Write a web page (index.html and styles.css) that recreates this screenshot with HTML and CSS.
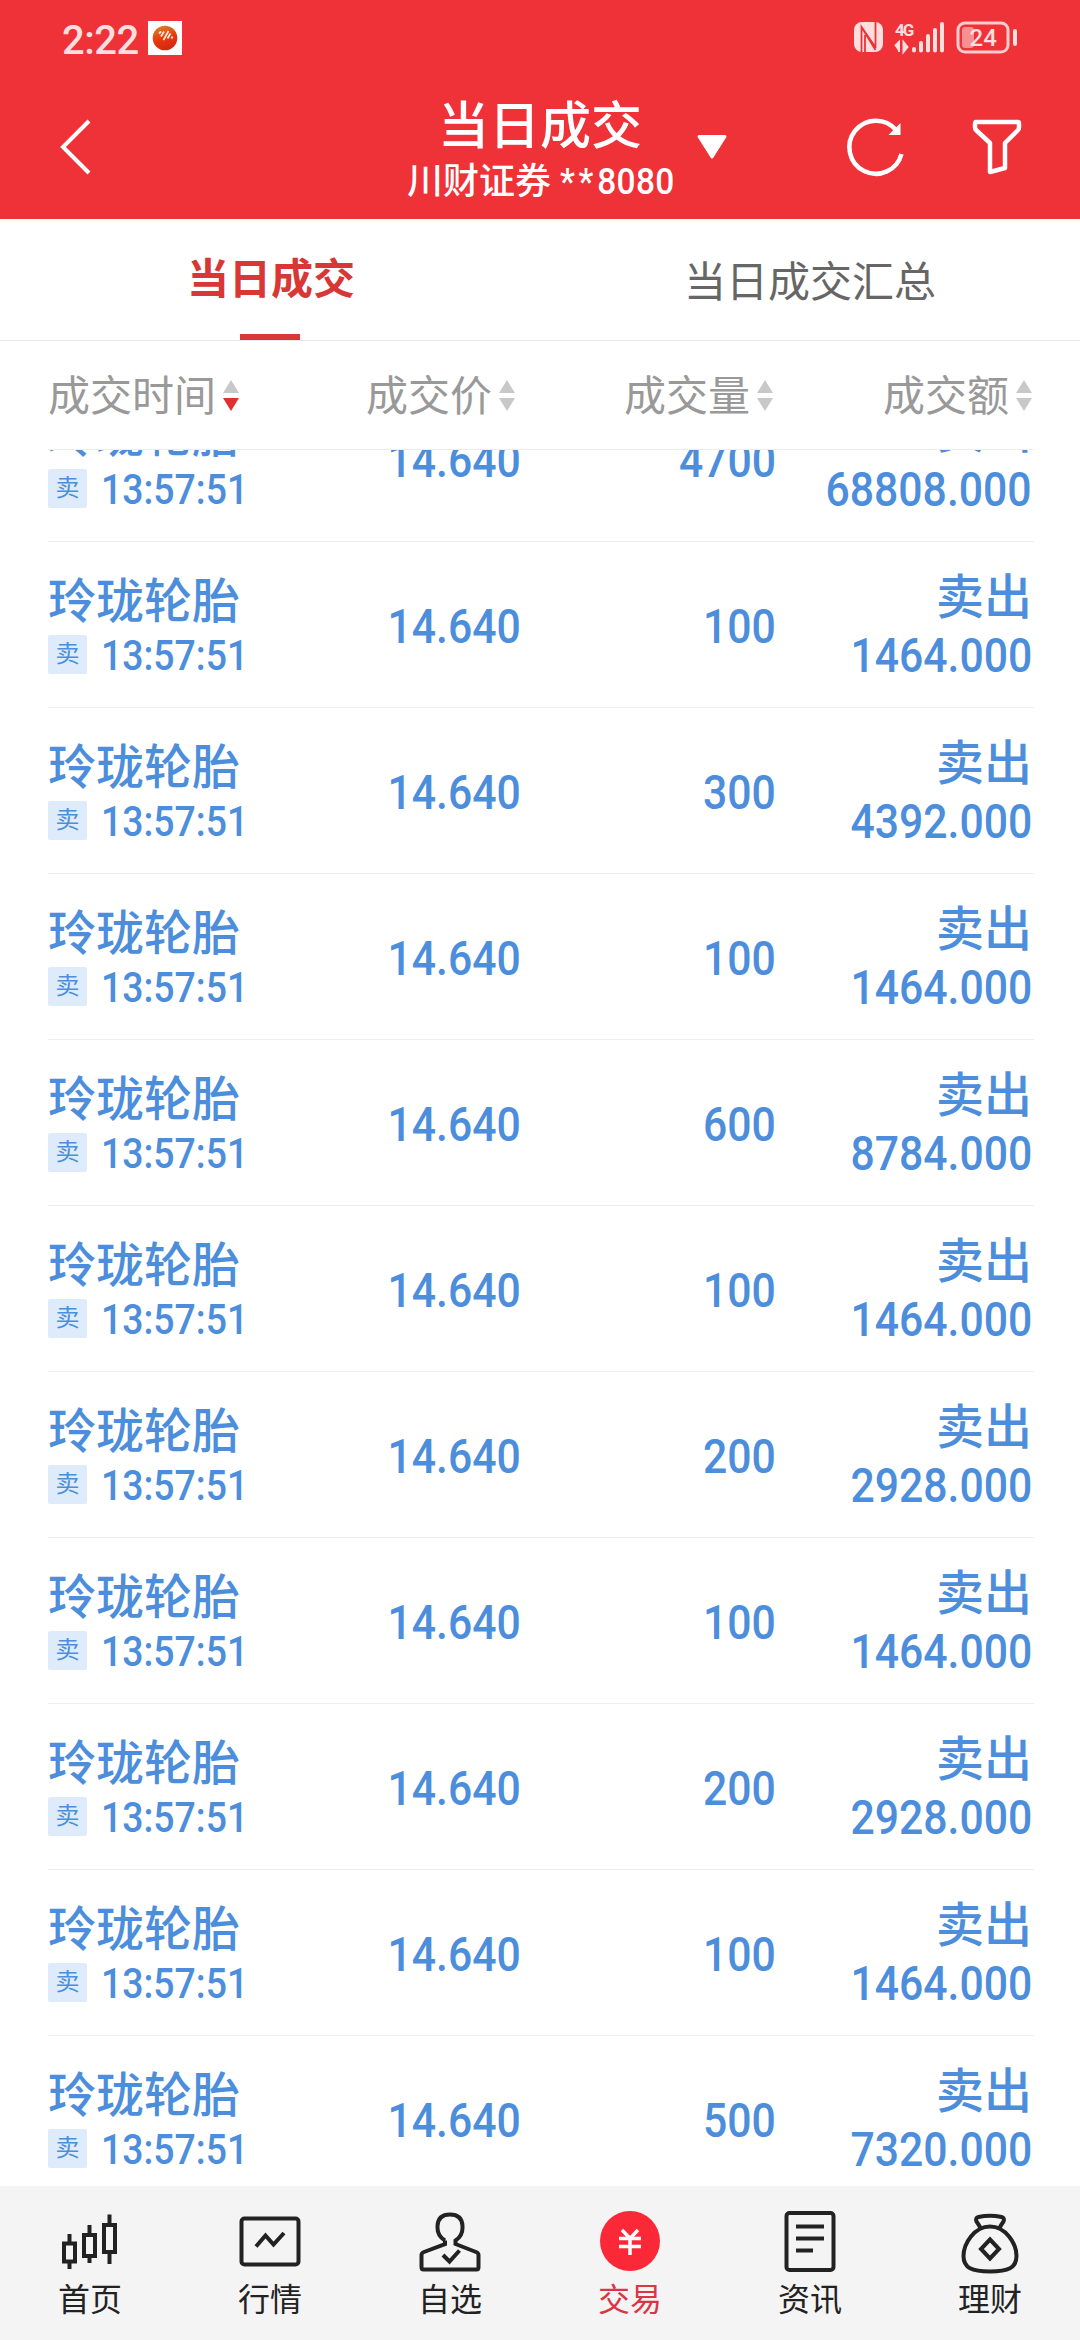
FILE: index.html
```
<!DOCTYPE html>
<html lang="zh-CN">

<head>
	<meta charset="UTF-8">
	<title>当日成交</title>
	<link rel="stylesheet" href="styles.css">
</head>

<body>
	<header class="header">
		<div class="status">
			<span class="clock">2:22</span>
			<svg class="app" width="34" height="34" viewBox="0 0 34 34">
				<defs>
					<linearGradient id="ball" x1="0" y1="0" x2="0.3" y2="1">
						<stop offset="0" stop-color="#d98a2b" />
						<stop offset="0.6" stop-color="#e8380c" />
						<stop offset="1" stop-color="#d32a12" />
					</linearGradient>
				</defs>
				<rect width="34" height="34" fill="#fff" />
				<circle cx="17" cy="17" r="12.3" fill="url(#ball)" />
				<path d="M11 12.500l2-2M13 15.500l3-5M15.500 19l5-9M19.500 17.500l3-5M23.500 17.500l1-2" stroke="#ffe9d8" stroke-width="1.8" fill="none" />
			</svg>
			<div class="signals">
				<svg width="170" height="36" viewBox="0 0 170 36">
					<rect x="1" y="1" width="29" height="30" rx="8" fill="#ffdede" />
					<path d="M8.500 31V6L23 27M22.500 1v25M8.500 6l14 23M12 31V14" stroke="#ef3138" stroke-width="1.8" fill="none" />
					<text class="net" x="42" y="14.500">4G</text>
					<path d="M42 25l4-4v10M50.500 21v10l4-5z" fill="#ffdede" stroke="#ffdede" stroke-width="2" />
					<path d="M61 28v1.500M68 22v7.500M75 15v14.500M82 9v20.500M89 3v26.500" stroke="#ffdede" stroke-width="4" stroke-linecap="round" fill="none" />
					<rect x="105" y="2" width="50" height="29" rx="7" stroke="#ffcdcd" stroke-width="3" fill="none" />
					<rect x="109" y="6" width="12" height="21" rx="3" fill="#f98f90" />
					<path d="M162 10v13" stroke="#ffdede" stroke-width="4" stroke-linecap="round" />
					<text class="level" x="116.500" y="25">24</text>
				</svg>
			</div>
		</div>
		<div class="bar">
			<svg class="back" width="34" height="58" viewBox="0 0 34 58">
				<path d="M31 3L5 29l26 26" stroke="#fff" stroke-width="4" fill="none" />
			</svg>
			<div class="titles">
				<h1>当日成交</h1>
				<p>川财证券 <span class="num"><i>**</i>8080</span></p>
			</div>
			<svg class="drop" width="30" height="24" viewBox="0 0 30 24">
				<path d="M2 1.500h26L15 22z" fill="#fff" stroke="#fff" stroke-width="3" stroke-linejoin="round" />
			</svg>
			<svg class="refresh" width="60" height="60" viewBox="0 0 60 60">
				<path d="M55.500 37A26.500 26.500 0 1 1 50 13" stroke="#fff" stroke-width="4.500" fill="none" />
				<path d="M54.500 6v12H42.500z" fill="#fff" />
			</svg>
			<svg class="filter" width="50" height="56" viewBox="0 0 50 56">
				<path d="M4 3h42q1 0 1 2v3q0 2-1 3L33 24v25l-15 4V24L4 11Q3 10 3 8V5q0-2 1-2z" stroke="#fff" stroke-width="4.500" stroke-linejoin="round" fill="none" />
			</svg>
		</div>
	</header>

	<nav class="tabs">
		<a class="tab on">当日成交</a>
		<a class="tab">当日成交汇总</a>
	</nav>

	<div class="thead">
		<span class="th">成交时间<i class="sort down"></i></span>
		<span class="th">成交价<i class="sort"></i></span>
		<span class="th">成交量<i class="sort"></i></span>
		<span class="th">成交额<i class="sort"></i></span>
	</div>

	<main class="list"></main>

	<footer class="nav">
		<a class="item">
			<svg width="60" height="60" viewBox="0 0 60 60">
				<path d="M4 32.500h11v18H4zM24 24h11v21H24zM44 14h11v27H44zM9.500 23v9M9.500 50.500v7.500M29.500 14v9M29.500 45v7M49.500 3.500V14M49.500 41v12" />
			</svg>
			首页
		</a>
		<a class="item">
			<svg width="60" height="60" viewBox="0 0 60 60">
				<rect x="1.500" y="7.500" width="57" height="46" rx="3" />
				<path d="M16 35.500l9.500-11 8 9L44 22" />
			</svg>
			行情
		</a>
		<a class="item">
			<svg width="60" height="60" viewBox="0 0 60 60">
				<path d="M25 29.500V33L4 41q-2.500 1-2.500 3v12q0 2.500 2 2.500h53q2 0 2-2.500V44q0-2-2.500-3L35.500 33v-3.500Q42.500 25 42.500 17v-2Q42 3.500 30 3.500T17.500 15v2q0 8 7.500 12.500" />
				<path d="M23 44l6.500 6.500 10-11" />
			</svg>
			自选
		</a>
		<a class="item on">
			<svg width="60" height="60" viewBox="0 0 60 60">
				<circle class="coin" cx="30" cy="30" r="30" />
				<path class="yen" d="M22 19l8 8.500 8-8.500M19 27.500h22M19 35.500h22M30 27v17" />
			</svg>
			交易
		</a>
		<a class="item">
			<svg width="60" height="60" viewBox="0 0 60 60">
				<rect x="6.500" y="2" width="47" height="57" rx="3" />
				<path d="M16 15.500h28M16 27.500h28M16 39.500h17" />
			</svg>
			资讯
		</a>
		<a class="item">
			<svg width="60" height="60" viewBox="0 0 60 60">
				<path d="M20.500 17Q19 14 16.500 10.500q-1.500-3.500 2-4.500 11.500-2.500 23 0 3.500 1 2 4.500Q41 14 39.500 17" />
				<path d="M30 15.500C14 15.500 3.500 33 3.500 45 3.500 57 12 60.500 30 60.500S56.500 57 56.500 45C56.500 33 46 15.500 30 15.500z" />
				<path d="M30 28.500l9 9.500-9 9.500-9-9.500z" />
			</svg>
			理财
		</a>
	</footer>

	<script>
		var rows = [
			['4700', '68808.000'],
			['100', '1464.000'],
			['300', '4392.000'],
			['100', '1464.000'],
			['600', '8784.000'],
			['100', '1464.000'],
			['200', '2928.000'],
			['100', '1464.000'],
			['200', '2928.000'],
			['100', '1464.000'],
			['500', '7320.000']
		]

		var list = document.querySelector('.list')

		list.innerHTML = rows.map(it => `
			<div class="row">
				<div class="stock">
					<div class="name">玲珑轮胎</div>
					<div class="time"><b class="badge">卖</b><span class="num">13:57:51</span></div>
				</div>
				<div class="price"><span class="num">14.640</span></div>
				<div class="qty"><span class="num">${it[0]}</span></div>
				<div class="amount">
					<div class="side">卖出</div>
					<span class="num">${it[1]}</span>
				</div>
			</div>`).join('')
	</script>
</body>

</html>
```
FILE: styles.css
```
* {
	box-sizing: border-box;
	margin: 0;
	padding: 0;
}

body {
	display: flex;
	flex-direction: column;
	width: 1080px;
	height: 2340px;
	overflow: hidden;
	background-color: #fff;
	font-family: Roboto, 'Noto Sans CJK SC', sans-serif;
}

svg {
	display: block;
	flex: none;
	overflow: visible;
}

/* 数字字体偏窄 */
.num {
	display: inline-block;
	font-family: Roboto, sans-serif;
	font-weight: 500;
	transform: scaleX(0.89);
	transform-origin: right center;
}

.header {
	flex: none;
	height: 219px;
	background-color: #ef3138;
	color: #fff;
}

.status {
	display: flex;
	height: 78px;
	padding: 21px 62px 0 62px;
}

.clock {
	width: 86px;
	font-size: 40px;
	line-height: 40px;
	font-weight: 500;
	letter-spacing: -0.5px;
	color: #ffdede;
}

.signals {
	margin-left: auto;
	margin-right: -5px;
}

.net {
	font: 700 17px Roboto, sans-serif;
	letter-spacing: -2px;
	fill: #ffdede;
}

.level {
	font: 500 24px Roboto, sans-serif;
	fill: #ffdede;
}

.bar {
	display: flex;
	align-items: flex-start;
	padding-left: 58px;
}

.back {
	margin-top: 40px;
}

.titles {
	width: 280px;
	margin-left: 308px;
	padding-top: 18px;
	text-align: center;
}

h1 {
	font-size: 51px;
	line-height: 62px;
	font-weight: 500;
}

.titles p {
	font-size: 36px;
	line-height: 48px;
	font-weight: 500;
	white-space: nowrap;
	text-align: left;
	padding-left: 7px;
}

.titles .num {
	transform: scaleX(0.93);
	transform-origin: left center;
	letter-spacing: 0.4px;
}

.titles i {
	font-style: normal;
	letter-spacing: 4px;
}

.drop {
	margin: 57px 0 0 17px;
}

.refresh {
	margin: 39px 0 0 119px;
}

.filter {
	margin: 41px 0 0 66px;
}

.tabs {
	flex: none;
	display: flex;
	height: 122px;
	border-bottom: 1px solid #e8eaea;
}

.tab {
	position: relative;
	width: 540px;
	padding-top: 4px;
	line-height: 120px;
	text-align: center;
	font-size: 42px;
	color: #666;
}

.tab.on {
	padding: 3px 0 0 2px;
	line-height: 116px;
	font-weight: 700;
	color: #d93636;
}

.tab.on::after {
	content: '';
	position: absolute;
	left: 240px;
	bottom: 0;
	width: 60px;
	height: 6px;
	background-color: #d93636;
}

.thead {
	flex: none;
	display: grid;
	grid-template-columns: 318px 258px 259px 151px;
	height: 109px;
	margin: 0 46px 0 48px;
	border-bottom: 1px solid #ededed;
}

.th {
	display: flex;
	align-items: center;
	padding-top: 4px;
	font-size: 42px;
	line-height: 104px;
	color: #999;
	white-space: nowrap;
}

.sort {
	display: flex;
	flex-direction: column;
	gap: 5px;
	margin: -4px 0 0 7px;
}

.sort::before,
.sort::after {
	content: '';
	border: solid transparent;
	border-width: 0 8px;
}

.sort::before {
	border-bottom: 13px solid #c8c8c8;
}

.sort::after {
	border-top: 13px solid #c8c8c8;
}

.sort.down::after {
	border-top-color: #e03030;
}

.list {
	flex: 1;
	min-height: 0;
	overflow: hidden;
	margin: 0 46px 0 48px;
	color: #4c8edb;
}

.row {
	display: grid;
	grid-template-columns: 200px 273px 255px 1fr;
	height: 166px;
	border-bottom: 1px solid #eee;
	font-size: 48px;
	font-weight: 500;
}

/* 列表已向上滚动 */
.row:first-child {
	margin-top: -74px;
}

.name {
	padding-top: 28px;
	line-height: 64px;
	white-space: nowrap;
}

.time {
	display: flex;
	align-items: center;
	height: 40px;
	font-size: 42px;
}

.time .num {
	margin: 2px 0 0 14px;
	transform-origin: left center;
}

.badge {
	flex: none;
	width: 39px;
	height: 39px;
	line-height: 38px;
	border-radius: 2px;
	background-color: #deebfa;
	text-align: center;
	font-size: 24px;
	font-weight: 400;
}

.price,
.qty {
	padding-top: 1px;
	line-height: 168px;
	text-align: right;
}

.amount {
	padding-right: 2px;
	text-align: right;
	line-height: 54px;
}

.side {
	padding-top: 25px;
	line-height: 62px;
}

.nav {
	flex: none;
	display: flex;
	height: 154px;
	background-color: #f4f4f4;
}

.item {
	display: flex;
	flex-direction: column;
	align-items: center;
	width: 180px;
	padding-top: 25px;
	font-size: 32px;
	line-height: 58px;
	color: #222;
}

.item svg {
	fill: none;
	stroke: #222;
	stroke-width: 4px;
}

.item.on {
	color: #dc3545;
}

.item .coin {
	fill: #fb2838;
	stroke: none;
}

.item .yen {
	stroke: #fff;
	stroke-width: 3.5px;
}
```
